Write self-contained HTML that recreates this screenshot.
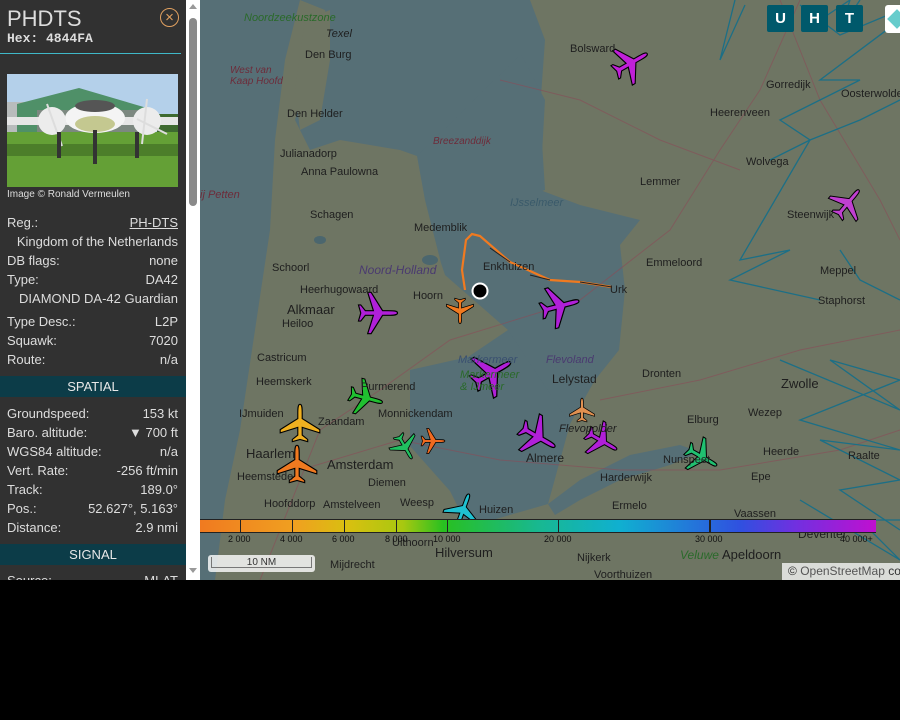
<!DOCTYPE html>
<html><head><meta charset="utf-8"><style>
html,body{margin:0;padding:0;background:#000;width:900px;height:720px;overflow:hidden;font-family:"Liberation Sans",sans-serif}
#side{position:absolute;left:0;top:0;width:186px;height:580px;background:#313131;color:#ddd;overflow:hidden}
#sb{position:absolute;left:186px;top:0;width:14px;height:580px;background:#fff}
#thumb{position:absolute;left:189px;top:18px;width:8px;height:188px;background:#8a8a8a;border-radius:4px}
.row{position:absolute;left:7px;width:171px;font-size:13px;height:19px;line-height:19px}
.row .r{position:absolute;right:0;top:0}
.hdr{position:absolute;left:0;width:186px;height:21px;line-height:21px;background:#0c3c48;color:#e8e8e8;text-align:center;font-size:13px}
#map{position:absolute;left:200px;top:0;width:700px;height:580px;overflow:hidden;background:#6e7563}
.lbl{position:absolute;font-size:11px;color:#1e1e1e;white-space:nowrap}
.it{font-style:italic;color:#6d2c3a;font-size:11px}
.btn{position:absolute;top:5px;width:27px;height:27px;background:#00596b;color:#fff;font-weight:bold;font-size:15px;text-align:center;line-height:27px;border-radius:2px}
.sc{position:absolute;top:534px;font-size:9px;color:#111}
</style></head><body>
<div id="side">
 <div style="position:absolute;left:7px;top:6px;font-size:22px;color:#ddd">PHDTS</div>
 <div style="position:absolute;left:160px;top:8px;width:17px;height:17px;border:1.5px solid #e0a060;border-radius:50%;color:#e0a060;font-size:15px;line-height:17px;text-align:center">×</div>
 <div style="position:absolute;left:7px;top:31px;font-family:'Liberation Mono',monospace;font-weight:bold;font-size:13px;color:#ddd">Hex: 4844FA</div>
 <div style="position:absolute;left:0;top:53px;width:181px;height:1px;background:#3fb8c8"></div>
 <svg style="position:absolute;left:7px;top:74px" width="171" height="113" viewBox="0 0 171 113">
  <rect width="171" height="113" fill="#b4d0ea"/>
  <rect x="0" y="28" width="25" height="30" fill="#b8bcbc"/>
  <polygon points="10,30 72,14 140,34 140,60 10,60" fill="#4f9068"/>
  <rect x="30" y="36" width="110" height="24" fill="#7c8880"/>
  <rect x="150" y="40" width="21" height="20" fill="#3e6a30"/>
  <rect x="0" y="58" width="171" height="55" fill="#64a036"/>
  <rect x="0" y="70" width="171" height="12" fill="#4c7e2a"/>
  <rect x="0" y="43" width="171" height="8" fill="#e6e6e6"/>
  <ellipse cx="88" cy="44" rx="30" ry="15" fill="#f4f4f4"/>
  <ellipse cx="88" cy="32" rx="20" ry="6" fill="#555"/>
  <ellipse cx="45" cy="47" rx="14" ry="14" fill="#ececec"/>
  <ellipse cx="140" cy="47" rx="14" ry="14" fill="#ececec"/>
  <ellipse cx="88" cy="50" rx="20" ry="8" fill="#c4c890"/>
  <path d="M40,30 L55,72 M140,25 L135,70 M130,45 L160,60" stroke="#ddd" stroke-width="2"/>
  <rect x="86" y="56" width="4" height="34" fill="#333"/>
  <rect x="50" y="58" width="4" height="26" fill="#333"/>
  <rect x="128" y="58" width="4" height="26" fill="#333"/>
 </svg>
 <div style="position:absolute;left:7px;top:189px;font-size:10px;color:#ddd">Image © Ronald Vermeulen</div>
 <div class="row" style="top:213px">Reg.:<span class="r" style="text-decoration:underline">PH-DTS</span></div>
 <div class="row" style="top:232px"><span class="r">Kingdom of the Netherlands</span></div>
 <div class="row" style="top:251px">DB flags:<span class="r">none</span></div>
 <div class="row" style="top:270px">Type:<span class="r">DA42</span></div>
 <div class="row" style="top:289px"><span class="r">DIAMOND DA-42 Guardian</span></div>
 <div class="row" style="top:312px">Type Desc.:<span class="r">L2P</span></div>
 <div class="row" style="top:331px">Squawk:<span class="r">7020</span></div>
 <div class="row" style="top:350px">Route:<span class="r">n/a</span></div>
 <div class="hdr" style="top:376px">SPATIAL</div>
 <div class="row" style="top:404px">Groundspeed:<span class="r">153 kt</span></div>
 <div class="row" style="top:423px">Baro. altitude:<span class="r">▼ 700 ft</span></div>
 <div class="row" style="top:442px">WGS84 altitude:<span class="r">n/a</span></div>
 <div class="row" style="top:461px">Vert. Rate:<span class="r">-256 ft/min</span></div>
 <div class="row" style="top:480px">Track:<span class="r">189.0°</span></div>
 <div class="row" style="top:499px">Pos.:<span class="r">52.627°, 5.163°</span></div>
 <div class="row" style="top:518px">Distance:<span class="r">2.9 nmi</span></div>
 <div class="hdr" style="top:544px">SIGNAL</div>
 <div class="row" style="top:571px">Source:<span class="r">MLAT</span></div>
</div>
<div id="sb"><div style="position:absolute;left:3px;top:4px;border:4px solid transparent;border-bottom:5px solid #999;border-top:0"></div><div style="position:absolute;left:3px;top:568px;border:4px solid transparent;border-top:5px solid #999;border-bottom:0"></div></div>
<div id="thumb"></div>
<div id="map">
<svg width="700" height="580" style="position:absolute;left:0;top:0">
 <g fill="#566f76">
  <polygon points="0,0 100,0 85,60 75,140 70,230 55,330 40,430 25,500 15,580 0,580"/>
  <polygon points="100,0 330,0 345,40 340,110 345,190 330,195 280,185 260,170 217,156 200,150 140,140 110,150 95,120 110,70 130,40 125,10"/>
  <polygon points="217,156 321,54 345,100 340,190 380,205 440,220 420,245 425,290 419,350 395,380 370,424 345,420 330,380 308,330 245,275 241,263 225,200"/>
  <polygon points="210,370 268,357 308,330 370,424 348,504 268,527 250,491 210,446"/>
  <polygon points="348,504 380,480 430,455 480,445 500,452 470,465 420,480 380,500 355,515"/>
 </g>
 <polygon points="105,20 130,10 130,60 120,120 100,130 95,90" fill="#6e7563"/>
 <g fill="#4b666e"><ellipse cx="120" cy="240" rx="6" ry="4"/><ellipse cx="230" cy="260" rx="8" ry="5"/></g>
 <g fill="none" stroke="#8a4c58" stroke-width="1" opacity=".6">
  <path d="M60,580 L120,430 L180,390 L250,340 L380,300 L470,230 L520,150 L560,90 L600,0"/>
  <path d="M100,470 L200,440 L300,460 L420,470 L520,470 L640,450 L700,430"/>
  <path d="M580,0 L620,100 L680,200 L700,240"/>
  <path d="M300,80 L380,100 L460,140 L540,170"/>
  <path d="M400,400 L500,380 L600,350 L700,330"/>
 </g>
 <g fill="none" stroke="#1c6f86" stroke-width="1.3">
  <polyline points="535,0 520,60 545,5"/>
  <polyline points="660,0 640,30 650,0 620,20 600,5 640,35 700,10"/>
  <polyline points="700,20 620,80 660,80 580,120 610,140 540,260 590,250 530,280 620,300"/>
  <polyline points="570,160 610,140 660,120 700,100"/>
  <polyline points="640,250 660,280 700,300"/>
  <polyline points="580,360 700,410 630,360 700,380 600,420 700,450 620,440 700,480 640,490 700,530"/>
  <polyline points="600,500 700,560 660,520 700,520"/>
 </g>
 <path d="M265,290 L262,270 L266,240 L272,234 L280,236 L310,262 L350,280 L380,282 L412,287" fill="none" stroke="#f07a20" stroke-width="2.2"/>
 <path d="M290,248 L310,262 M330,275 L350,280 M380,282 L412,287" fill="none" stroke="#222" stroke-width="1"/>
 <circle cx="280" cy="291" r="7.5" fill="#000" stroke="#fff" stroke-width="2"/>
 <defs><path id="pl" d="M0,-17 C2,-17 2,-13 2,-9 L2,-4 L18,6 L18,9 L2,4 L2,11 L7,15 L7,17 L0,15 L-7,17 L-7,15 L-2,11 L-2,4 L-18,9 L-18,6 L-2,-4 L-2,-9 C-2,-13 -2,-17 0,-17Z" stroke="#000" stroke-width="1"/></defs>
 <use href="#pl" transform="translate(431,63) rotate(60) scale(1.1)" fill="#c020d8"/>
 <use href="#pl" transform="translate(648,203) rotate(40)" fill="#c040d0"/>
 <use href="#pl" transform="translate(178,313) rotate(90) scale(1.15)" fill="#b020d8"/>
 <use href="#pl" transform="translate(260,311) rotate(180) scale(.75)" fill="#f07a20"/>
 <use href="#pl" transform="translate(360,306) rotate(75) scale(1.15)" fill="#b020d8"/>
 <use href="#pl" transform="translate(292,373) rotate(60) scale(1.25)" fill="#b020d8"/>
 <use href="#pl" transform="translate(166,398) rotate(105)" fill="#20c030"/>
 <use href="#pl" transform="translate(100,423) rotate(0) scale(1.1)" fill="#f0b020"/>
 <use href="#pl" transform="translate(97,464) rotate(0) scale(1.1)" fill="#f07a20"/>
 <use href="#pl" transform="translate(205,447) rotate(150) scale(.8)" fill="#20c060"/>
 <use href="#pl" transform="translate(433,441) rotate(90) scale(.7)" fill="#f06a20" visibility="hidden"/>
 <use href="#pl" transform="translate(233,441) rotate(90) scale(.7)" fill="#f06a20"/>
 <use href="#pl" transform="translate(338,437) rotate(120) scale(1.15)" fill="#b020d8"/>
 <use href="#pl" transform="translate(382,410) rotate(0) scale(.7)" fill="#e09050"/>
 <use href="#pl" transform="translate(402,441) rotate(120)" fill="#b020d8"/>
 <use href="#pl" transform="translate(502,457) rotate(120)" fill="#20c070"/>
 <use href="#pl" transform="translate(263,510) rotate(20)" fill="#20c0d0"/>
</svg>
<div class="lbl" style="left:44px;top:12px;color:#2a6a2a;font-style:italic">Noordzeekustzone</div>
<div class="lbl" style="left:126px;top:28px;font-style:italic">Texel</div>
<div class="lbl" style="left:105px;top:49px">Den Burg</div>
<div class="lbl it" style="left:30px;top:65px;font-size:10px">West van<br>Kaap Hoofd</div>
<div class="lbl" style="left:87px;top:108px">Den Helder</div>
<div class="lbl it" style="left:233px;top:136px;font-size:10px">Breezanddijk</div>
<div class="lbl" style="left:80px;top:148px">Julianadorp</div>
<div class="lbl" style="left:101px;top:166px">Anna Paulowna</div>
<div class="lbl it" style="left:0;top:189px">ij Petten</div>
<div class="lbl" style="left:110px;top:209px">Schagen</div>
<div class="lbl" style="left:214px;top:222px">Medemblik</div>
<div class="lbl" style="left:310px;top:197px;color:#3a5a6a;font-style:italic">IJsselmeer</div>
<div class="lbl" style="left:72px;top:262px">Schoorl</div>
<div class="lbl it" style="left:159px;top:263px;color:#4a3a70;font-size:12px">Noord-Holland</div>
<div class="lbl" style="left:283px;top:261px">Enkhuizen</div>
<div class="lbl" style="left:100px;top:284px">Heerhugowaard</div>
<div class="lbl" style="left:213px;top:290px">Hoorn</div>
<div class="lbl" style="left:87px;top:302px;font-size:13px">Alkmaar</div>
<div class="lbl" style="left:82px;top:318px">Heiloo</div>
<div class="lbl" style="left:57px;top:352px">Castricum</div>
<div class="lbl it" style="left:258px;top:354px;color:#3a5070">Markermeer</div>
<div class="lbl it" style="left:260px;top:369px;color:#2a6a2a">Markermeer<br>&amp; IJmeer</div>
<div class="lbl it" style="left:346px;top:354px;color:#4a3a70">Flevoland</div>
<div class="lbl" style="left:352px;top:372px;font-size:12px">Lelystad</div>
<div class="lbl" style="left:56px;top:376px">Heemskerk</div>
<div class="lbl" style="left:161px;top:381px">Purmerend</div>
<div class="lbl" style="left:39px;top:408px">IJmuiden</div>
<div class="lbl" style="left:178px;top:408px">Monnickendam</div>
<div class="lbl" style="left:118px;top:416px">Zaandam</div>
<div class="lbl" style="left:359px;top:423px;font-style:italic">Flevopolder</div>
<div class="lbl" style="left:46px;top:446px;font-size:13px">Haarlem</div>
<div class="lbl" style="left:326px;top:451px;font-size:12px">Almere</div>
<div class="lbl" style="left:127px;top:457px;font-size:13px">Amsterdam</div>
<div class="lbl" style="left:37px;top:471px">Heemstede</div>
<div class="lbl" style="left:168px;top:477px">Diemen</div>
<div class="lbl" style="left:64px;top:498px">Hoofddorp</div>
<div class="lbl" style="left:123px;top:499px">Amstelveen</div>
<div class="lbl" style="left:200px;top:497px">Weesp</div>
<div class="lbl" style="left:279px;top:504px">Huizen</div>
<div class="lbl" style="left:192px;top:537px">Uithoorn</div>
<div class="lbl" style="left:235px;top:545px;font-size:13px">Hilversum</div>
<div class="lbl" style="left:130px;top:559px">Mijdrecht</div>
<div class="lbl" style="left:377px;top:552px">Nijkerk</div>
<div class="lbl" style="left:394px;top:569px">Voorthuizen</div>
<div class="lbl" style="left:370px;top:43px">Bolsward</div>
<div class="lbl" style="left:566px;top:79px">Gorredijk</div>
<div class="lbl" style="left:510px;top:107px">Heerenveen</div>
<div class="lbl" style="left:641px;top:88px">Oosterwolde</div>
<div class="lbl" style="left:546px;top:156px">Wolvega</div>
<div class="lbl" style="left:440px;top:176px">Lemmer</div>
<div class="lbl" style="left:587px;top:209px">Steenwijk</div>
<div class="lbl" style="left:446px;top:257px">Emmeloord</div>
<div class="lbl" style="left:410px;top:284px">Urk</div>
<div class="lbl" style="left:620px;top:265px">Meppel</div>
<div class="lbl" style="left:618px;top:295px">Staphorst</div>
<div class="lbl" style="left:442px;top:368px">Dronten</div>
<div class="lbl" style="left:487px;top:414px">Elburg</div>
<div class="lbl" style="left:548px;top:407px">Wezep</div>
<div class="lbl" style="left:581px;top:376px;font-size:13px">Zwolle</div>
<div class="lbl" style="left:563px;top:446px">Heerde</div>
<div class="lbl" style="left:463px;top:454px">Nunspeet</div>
<div class="lbl" style="left:648px;top:450px">Raalte</div>
<div class="lbl" style="left:400px;top:472px">Harderwijk</div>
<div class="lbl" style="left:551px;top:471px">Epe</div>
<div class="lbl" style="left:412px;top:500px">Ermelo</div>
<div class="lbl" style="left:534px;top:508px">Vaassen</div>
<div class="lbl" style="left:598px;top:527px;font-size:12px">Deventer</div>
<div class="lbl" style="left:480px;top:548px;font-style:italic;color:#2a6a2a;font-size:12px">Veluwe</div>
<div class="lbl" style="left:522px;top:547px;font-size:13px">Apeldoorn</div>
<div style="position:absolute;left:0;top:519px;width:676px;height:12px;background:linear-gradient(90deg,#f07a20 0%,#f0a020 14%,#d8c010 22%,#a8c810 30%,#28c020 36%,#18b890 50%,#10b0d0 62%,#3050e0 80%,#7030e0 88%,#c010d0 100%);border-top:1px solid #222;border-bottom:1px solid #222"></div>
<div style="position:absolute;top:519px;left:40px;width:1px;height:13px;background:#222"></div>
<div style="position:absolute;top:519px;left:92px;width:1px;height:13px;background:#222"></div>
<div style="position:absolute;top:519px;left:144px;width:1px;height:13px;background:#222"></div>
<div style="position:absolute;top:519px;left:196px;width:1px;height:13px;background:#222"></div>
<div style="position:absolute;top:519px;left:247px;width:1px;height:13px;background:#222"></div>
<div style="position:absolute;top:519px;left:358px;width:1px;height:13px;background:#222"></div>
<div style="position:absolute;top:519px;left:509px;width:2px;height:13px;background:#222"></div>
<div class="sc" style="left:28px">2 000</div><div class="sc" style="left:80px">4 000</div><div class="sc" style="left:132px">6 000</div><div class="sc" style="left:185px">8 000</div><div class="sc" style="left:233px">10 000</div><div class="sc" style="left:344px">20 000</div><div class="sc" style="left:495px">30 000</div><div class="sc" style="left:640px">40 000+</div>
<div style="position:absolute;left:8px;top:555px;width:107px;height:17px;background:rgba(255,255,255,.8);border-radius:3px"><div style="position:absolute;left:3px;top:2px;width:99px;height:10px;border:1px solid #777;border-top:0;font-size:10px;color:#333;text-align:center;line-height:12px">10 NM</div></div>
<div style="position:absolute;left:582px;top:563px;width:118px;height:17px;background:rgba(255,255,255,.75);font-size:12px;color:#333;line-height:17px;padding-left:6px;white-space:nowrap">© <span style="color:#555">OpenStreetMap</span> co</div>
<div class="btn" style="left:567px">U</div><div class="btn" style="left:601px">H</div><div class="btn" style="left:636px">T</div>
<div style="position:absolute;left:685px;top:5px;width:20px;height:28px;background:#fff;border-radius:3px"><div style="position:absolute;left:5px;top:7px;width:14px;height:14px;background:#6cc;transform:rotate(45deg)"></div></div>
</div>
</body></html>
